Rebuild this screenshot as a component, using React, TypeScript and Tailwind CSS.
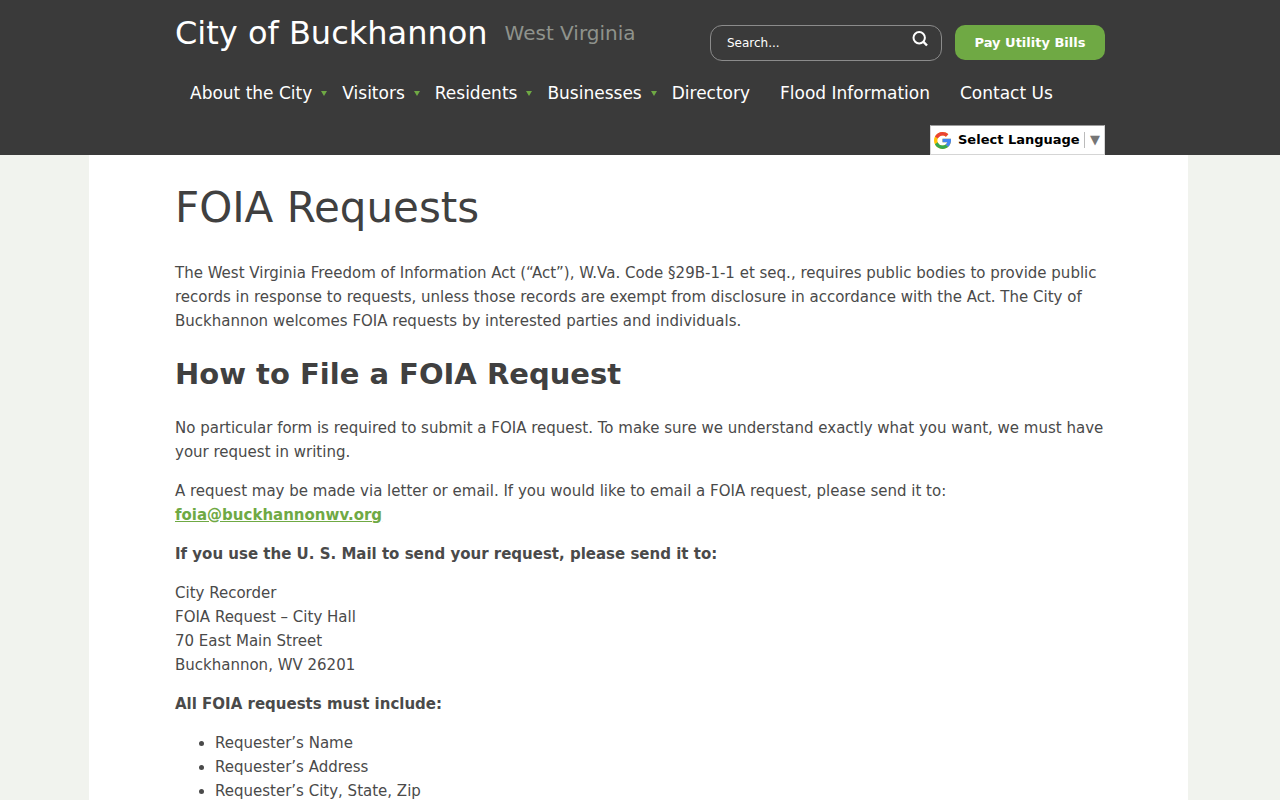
import React from 'react';

const navItems = [
  { label: 'About the City', menu: true },
  { label: 'Visitors', menu: true },
  { label: 'Residents', menu: true },
  { label: 'Businesses', menu: true },
  { label: 'Directory', menu: false },
  { label: 'Flood Information', menu: false },
  { label: 'Contact Us', menu: false },
];

const requirements = ['Requester’s Name', 'Requester’s Address', 'Requester’s City, State, Zip'];

function SearchForm() {
  return (
    <form className="relative" role="search">
      <input
        type="text"
        aria-label="Search"
        placeholder="Search..."
        className="block h-9 w-58 rounded-xl border border-[#8b8b8b] bg-transparent pl-4 pr-10 text-[12px] text-white placeholder:text-white"
      />
      <button type="submit" aria-label="Submit search" className="absolute right-3 top-1">
        <svg className="size-5" viewBox="0 0 20 20" fill="none" stroke="#fff" strokeWidth="2">
          <circle cx="9.200" cy="8.700" r="5.700" />
          <path d="M13.200 12.700l3.800 3.800" strokeWidth="2.400" />
        </svg>
      </button>
    </form>
  );
}

function LanguagePicker() {
  return (
    <div className="relative flex h-[30px] w-[175px] items-center border border-t-[#9b9b9b] border-b-[#d5d5d5] border-x-[#d5d5d5] bg-white">
      <svg className="pointer-events-none absolute left-[3px] size-[17px]" viewBox="4 4 40 40">
        <path fill="#FFC107" d="M43.6 20H42V20H24v8h11.3C33.700 32.700 29.200 36 24 36c-6.600 0-12-5.400-12-12s5.400-12 12-12c3.100 0 5.800 1.200 8 3l5.700-5.700C34 6.100 29.300 4 24 4 13 4 4 13 4 24s9 20 20 20 20-9 20-20c0-1.300-.1-2.700-.4-4z" />
        <path fill="#EA4335" d="M6.300 14.700l6.600 4.800C14.700 15.100 19 12 24 12c3.100 0 5.800 1.200 8 3l5.700-5.700C34 6.100 29.300 4 24 4 16.300 4 9.700 8.300 6.300 14.700z" />
        <path fill="#34A853" d="M24 44c5.200 0 9.900-2 13.400-5.200l-6.200-5.200C29.200 35.100 26.700 36 24 36c-5.200 0-9.600-3.300-11.300-7.900l-6.500 5C9.500 39.600 16.200 44 24 44z" />
        <path fill="#4285F4" d="M43.600 20H24v8h11.300c-.8 2.200-2.200 4.200-4.100 5.600l6.200 5.200C37 39.200 44 34 44 24c0-1.300-.1-2.700-.4-4z" />
      </svg>
      <select aria-label="Language" className="h-full w-full appearance-none bg-transparent pl-[27px] text-[13px] font-bold text-black">
        <option>Select Language</option>
      </select>
      <span className="pointer-events-none absolute right-1 border-l border-[#bbb] pl-[5px] text-[13px] leading-4 text-[#767676]" aria-hidden="true">▼</span>
    </div>
  );
}

function Header() {
  return (
    <header className="bg-[#3a3a3a] text-white">
      <div className="mx-auto max-w-[930px]">
        <div className="flex h-[73px] justify-between">
          <div className="flex items-start gap-[17px] pt-3 leading-[42px]">
            <a href="#" className="text-[32px]">City of Buckhannon</a>
            <span className="text-[20px] text-[#8f938c]">West Virginia</span>
          </div>
          <div className="flex items-start gap-[13px] pt-[25px]">
            <SearchForm />
            <a href="#" className="block h-[35px] w-[150px] whitespace-nowrap rounded-[10px] bg-[#6fa944] text-center text-[13px] font-bold leading-[35px]">Pay Utility Bills</a>
          </div>
        </div>

        <nav className="h-[52px]">
          <ul className="flex gap-[15px] pl-[15px] text-[17px] leading-10">
            {navItems.map((item) => (
              <li key={item.label} className={item.menu ? '' : 'pr-[15px]'}>
                <a href="#" className="flex items-center whitespace-nowrap">
                  {item.label}
                  {item.menu && (
                    <svg className="ml-[9px] h-[5px] w-[6px]" viewBox="0 0 6 5">
                      <path d="M0 0h6L3 5z" fill="#6fa944" />
                    </svg>
                  )}
                </a>
              </li>
            ))}
          </ul>
        </nav>

        <div className="flex justify-end">
          <LanguagePicker />
        </div>
      </div>
    </header>
  );
}

export default function App() {
  return (
    <div className="min-h-screen bg-[#f1f3ee] font-['DejaVu_Sans',sans-serif]">
      <Header />
      <div className="pr-[3px]">
        <main className="mx-auto max-w-[1099px] space-y-[15px] bg-white pl-[86px] pr-[83px] pt-[25px] text-[15px] leading-6 text-[#4a4a4a]">
          <h1 className="mb-[26px] text-[42px] leading-[55px] text-[#404040]">FOIA Requests</h1>
          <p>
            The West Virginia Freedom of Information Act (“Act”), W.Va. Code §29B-1-1 et seq., requires public
            bodies to provide public records in response to requests, unless those records are exempt from
            disclosure in accordance with the Act. The City of Buckhannon welcomes FOIA requests by interested
            parties and individuals.
          </p>
          <h2 className="mb-[23px] mt-[22px] text-[29px] font-bold leading-[38px] text-[#404040]">How to File a FOIA Request</h2>
          <p>
            No particular form is required to submit a FOIA request. To make sure we understand exactly what you
            want, we must have your request in writing.
          </p>
          <p>
            A request may be made via letter or email. If you would like to email a FOIA request, please send it to:{' '}
            <a href="mailto:foia@buckhannonwv.org" className="font-bold text-[#6fa944] underline">foia@buckhannonwv.org</a>
          </p>
          <p className="font-bold">If you use the U. S. Mail to send your request, please send it to:</p>
          <address className="not-italic">
            City Recorder<br />
            FOIA Request – City Hall<br />
            70 East Main Street<br />
            Buckhannon, WV 26201
          </address>
          <p className="font-bold">All FOIA requests must include:</p>
          <ul className="list-disc pl-10">
            {requirements.map((item) => (
              <li key={item}>{item}</li>
            ))}
          </ul>
        </main>
      </div>
    </div>
  );
}
